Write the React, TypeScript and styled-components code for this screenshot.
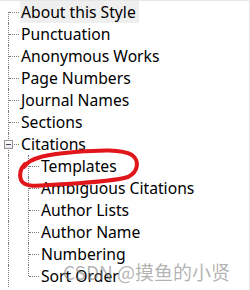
import React from "react";
import styled, { createGlobalStyle } from "styled-components";

const Global = createGlobalStyle`
  html, body { margin: 0; padding: 0; background: #ffffff; }
  body { width: 250px; height: 290px; overflow: hidden; }
`;

type VLine = "full" | "top" | "bottom" | "none";

interface GuideSpec {
  v: VLine;
  h: boolean;
  box?: boolean;
}

interface RowSpec {
  label: string;
  guides: GuideSpec[];
  selected?: boolean;
}

const Panel = styled.div`
  position: relative;
  box-sizing: border-box;
  width: 250px;
  height: 290px;
  border-top: 1px solid #e6e6e6;
  border-right: 1px solid #e6e6e6;
  background: #ffffff;
  display: flex;
  flex-direction: column;
  overflow: hidden;
  font-family: "Noto Sans", "Open Sans", sans-serif;
  font-size: 15.7px;
  color: #000000;
`;

const Row = styled.div`
  display: flex;
  align-items: stretch;
  height: 22px;
  flex: 0 0 22px;
`;

const Guide = styled.div<{ $v: VLine; $h: boolean }>`
  position: relative;
  width: 20px;
  flex: 0 0 20px;

  &::before {
    content: "";
    display: ${(p) => (p.$v === "none" ? "none" : "block")};
    position: absolute;
    left: 8px;
    top: ${(p) => (p.$v === "bottom" ? "11px" : "0")};
    height: ${(p) => (p.$v === "full" ? "22px" : "11px")};
    border-left: 1px dotted #7a7a7a;
  }

  &::after {
    content: "";
    display: ${(p) => (p.$h ? "block" : "none")};
    position: absolute;
    left: 9px;
    top: 11px;
    width: 10px;
    border-top: 1px dotted #7a7a7a;
  }
`;

const ExpandBox = styled.div`
  position: absolute;
  left: 4px;
  top: 7px;
  width: 7px;
  height: 7px;
  border: 1px solid #919191;
  background: linear-gradient(#ffffff, #e8e8e8);
  z-index: 1;
  display: flex;
  align-items: center;
  justify-content: center;

  &::before {
    content: "";
    width: 5px;
    height: 1px;
    background: #3c4a66;
  }
`;

const Label = styled.div<{ $selected?: boolean }>`
  display: flex;
  align-items: center;
  padding: 1px 3px 0 1px;
  white-space: nowrap;
  background: ${(p) => (p.$selected ? "#efefef" : "transparent")};
  line-height: 21px;
`;

const Mark = styled.svg`
  position: absolute;
  left: 0;
  top: 0;
  pointer-events: none;
`;

const Watermark = styled.div`
  position: absolute;
  left: 63px;
  top: 257px;
  font-family: "Noto Sans CJK SC", sans-serif;
  font-size: 19px;
  color: rgba(128, 128, 128, 0.6);
  white-space: nowrap;
`;

const top = (first = false): GuideSpec[] => [{ v: first ? "bottom" : "full", h: true }];
const child = (last = false): GuideSpec[] => [
  { v: "full", h: false },
  { v: last ? "top" : "full", h: true },
];

const rows: RowSpec[] = [
  { label: "About this Style", guides: top(true), selected: true },
  { label: "Punctuation", guides: top() },
  { label: "Anonymous Works", guides: top() },
  { label: "Page Numbers", guides: top() },
  { label: "Journal Names", guides: top() },
  { label: "Sections", guides: top() },
  { label: "Citations", guides: [{ v: "full", h: true, box: true }] },
  { label: "Templates", guides: child() },
  { label: "Ambiguous Citations", guides: child() },
  { label: "Author Lists", guides: child() },
  { label: "Author Name", guides: child() },
  { label: "Numbering", guides: child() },
  { label: "Sort Order", guides: child(true) },
];

export default function App() {
  return (
    <>
      <Global />
      <Panel>
        {rows.map((r) => (
          <Row key={r.label}>
            {r.guides.map((g, i) => (
              <Guide key={i} $v={g.v} $h={g.h}>
                {g.box && <ExpandBox />}
              </Guide>
            ))}
            <Label $selected={r.selected}>{r.label}</Label>
          </Row>
        ))}
        <Mark width="250" height="290" viewBox="0 0 250 290">
          <path
            d="M 24 166 C 30 156, 50 153, 75 151 C 100 149, 122 148, 132 154 C 140 160, 138 171, 128 176 C 112 181, 80 182, 50 184 C 35 185, 24 186, 21 179 C 19 173, 20 168, 25 163"
            fill="none"
            stroke="#e0161b"
            strokeWidth="4"
            strokeLinecap="round"
            strokeLinejoin="round"
          />
        </Mark>
        <Watermark>CSDN @摸鱼的小贤</Watermark>
      </Panel>
    </>
  );
}
